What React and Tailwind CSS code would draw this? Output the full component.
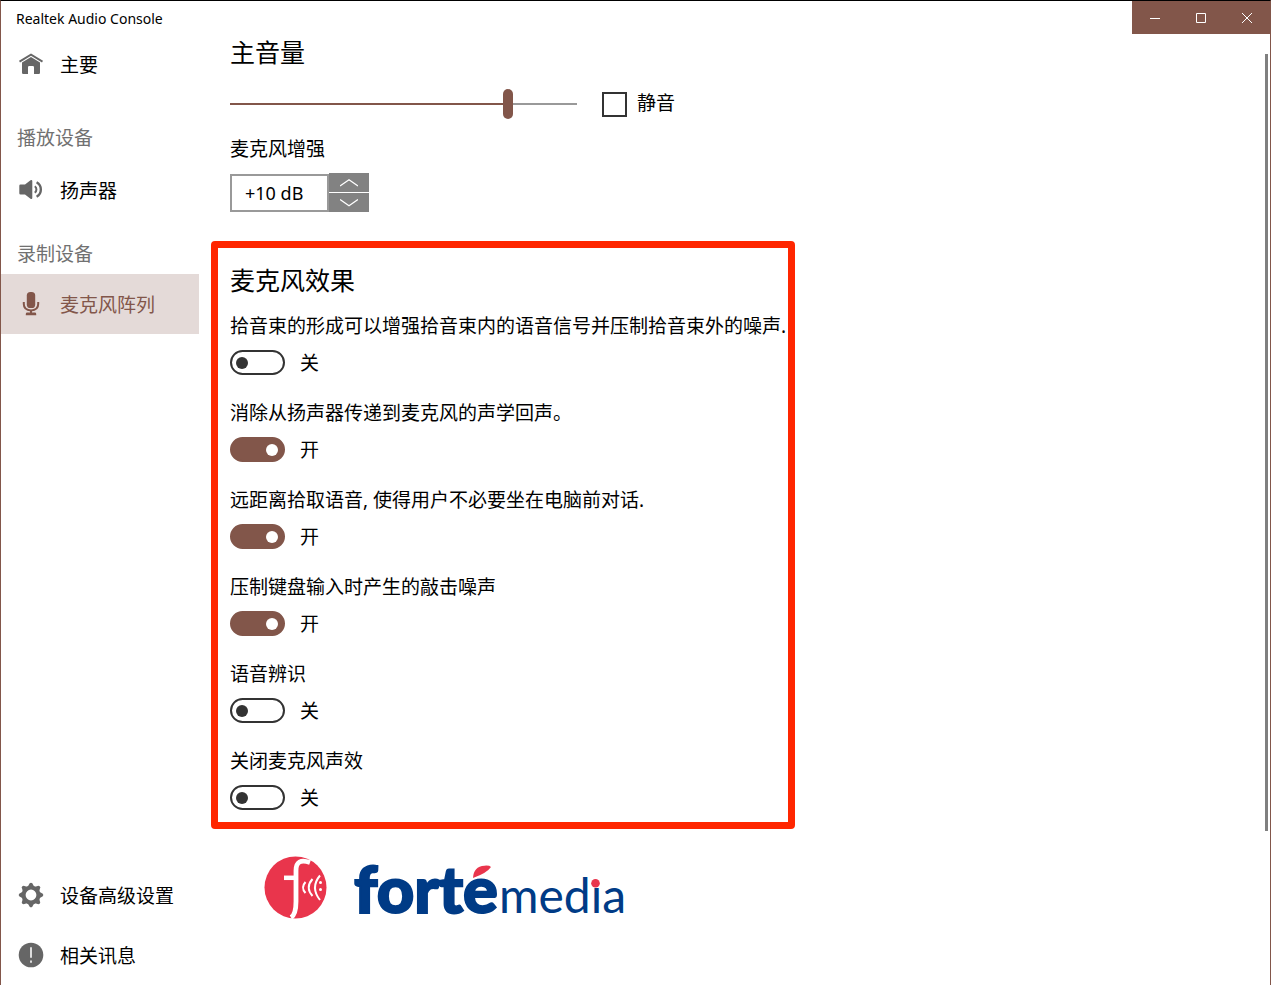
import React, { useState } from 'react';
import clsx from 'clsx';

const HomeIcon = () => (
  <svg viewBox="0 0 26 26" className="w-[26px] h-[26px]" fill="currentColor" aria-hidden="true">
    <path d="M13 2.400 25 9.800l-1 1.700L13 4.800 2 11.500 1 9.800z" />
    <path d="M13 5.900 22 11.500v10.200q0 1.200-1.200 1.200H16v-6.700q0-1.200-1.200-1.200h-3.600q-1.200 0-1.200 1.200v6.700H5.200Q4 22.900 4 21.700V11.500z" />
  </svg>
);

const SpeakerIcon = () => (
  <svg viewBox="0 0 26 26" className="w-[26px] h-[26px]" fill="currentColor" aria-hidden="true">
    <path d="M2.500 7.500h4.500L12.500 3.300Q14.300 2.400 14.300 4.300v16.400Q14.300 22.600 12.500 21.700L7 17.500H2.500Q1.300 17.500 1.300 16.300V8.700Q1.300 7.500 2.500 7.500z" />
    <path d="M16.800 9.300a4 4 0 0 1 0 6.400" fill="none" stroke="currentColor" strokeWidth="2" />
    <path d="M18.600 5.200a8.400 8.400 0 0 1 0 14.600" fill="none" stroke="currentColor" strokeWidth="2.400" />
  </svg>
);

const MicIcon = () => (
  <svg viewBox="0 0 26 26" className="w-[26px] h-[26px]" fill="currentColor" aria-hidden="true">
    <rect x="8.800" y="1" width="8.400" height="16" rx="3.600" />
    <path d="M5.800 11v2q0 6 7.200 6.400 7.200-.4 7.200-6.400v-2" fill="none" stroke="currentColor" strokeWidth="2" />
    <path d="M12 19h2v2.500h3.200q1 0 1 1.500v1.200H7.800V23q0-1.500 1-1.500H12z" />
  </svg>
);

const GearIcon = () => (
  <svg viewBox="0 0 26 26" className="w-[26px] h-[26px]" fill="currentColor" aria-hidden="true">
    <circle cx="13" cy="13" r="7.400" fill="none" stroke="currentColor" strokeWidth="4" />
    {[0, 45, 90, 135, 180, 225, 270, 315].map((angle) => (
      <path key={angle} d="M9.600 5 11.700 1.200q1.300-1 2.600 0L16.400 5z" transform={`rotate(${angle} 13 13)`} />
    ))}
  </svg>
);

const InfoIcon = () => (
  <svg viewBox="0 0 26 26" className="w-[26px] h-[26px]" aria-hidden="true">
    <circle cx="13" cy="13" r="12.300" fill="currentColor" />
    <path d="M13 5.200v10.600" stroke="#ddd" strokeWidth="2" />
    <path d="M13 18.500v2.200" stroke="#ddd" strokeWidth="2" />
  </svg>
);

const FortemediaLogo = () => (
  <svg viewBox="0 -12 370 96" className="w-[370px] h-[96px]" role="img" aria-label="fortémedia">
    <defs>
      {/* the accent and the dot are red shapes of their own, so the glyph tops fade out */}
      <linearGradient id="accent" gradientUnits="userSpaceOnUse" x1="0" y1="0" x2="0" y2="100">
        <stop offset="0.255" stopColor="#003b86" stopOpacity="0" />
        <stop offset="0.255" stopColor="#003b86" />
      </linearGradient>
      <linearGradient id="dot" gradientUnits="userSpaceOnUse" x1="0" y1="0" x2="0" y2="100">
        <stop offset="0.355" stopColor="#003b86" stopOpacity="0" />
        <stop offset="0.355" stopColor="#003b86" />
      </linearGradient>
    </defs>
    <circle cx="35.500" cy="34.500" r="31" fill="#e9354c" />
    <path d="M50 9.500q-14-5-14 8v31q0 13-5 16" fill="none" stroke="#fff" strokeWidth="4.800" />
    <path d="M24 24.800h12" stroke="#fff" strokeWidth="4.500" />
    <g fill="none" stroke="#fff" strokeWidth="2">
      <path d="M45.500 29q-5 5.500 0 11" />
      <path d="M52.500 26q-7.500 8.500 0 17" />
      <path d="M60 22.500q-10 12 0 24.500" />
    </g>
    <g fill="#fff">
      <circle cx="60.500" cy="29.500" r="1.500" />
      <circle cx="60.500" cy="36.500" r="1.500" />
    </g>
    <text x="94" y="60" fill="#003b86" stroke="#003b86" strokeWidth="2" className="font-['Lato'] font-black text-[65px]">
      fort<tspan fill="url(#accent)" stroke="url(#accent)">é</tspan>
    </text>
    <path d="M213 25Q213.500 13.500 224.500 12.700q5-.4 6.500 1.300-4 6-18 11z" fill="#e9354c" />
    <text x="239" y="60" fill="#003b86" className="font-['Lato'] font-normal text-[48px]">
      med<tspan fill="url(#dot)">i</tspan>a
    </text>
    <circle cx="335.500" cy="30.300" r="4.300" fill="#e9354c" />
  </svg>
);

const NavItem = ({ icon: Icon, label, active }) => (
  <a
    href="#"
    aria-current={active ? 'page' : undefined}
    className={clsx(
      'flex h-[60px] items-center gap-4 pl-[17px]',
      active ? 'bg-[#e4dad8] text-[#82564a]' : 'text-black'
    )}
  >
    <span className={active ? 'text-[#82564a]' : 'text-[#666]'}>
      <Icon />
    </span>
    <span className="pt-0.5">{label}</span>
  </a>
);

const ToggleRow = ({ id, label, defaultOn }) => {
  const [on, setOn] = useState(defaultOn);

  return (
    <div>
      <label htmlFor={id} className="block whitespace-nowrap leading-7">
        {label}
      </label>
      <div className="mt-2.5 flex h-[25px] items-center gap-[15px]">
        <input
          id={id}
          type="checkbox"
          role="switch"
          checked={on}
          onChange={(e) => setOn(e.target.checked)}
          className="flex h-[25px] w-[55px] appearance-none items-center rounded-full border-2 border-[#333] pr-[5px] pl-1 before:size-3 before:rounded-full before:bg-[#333] checked:justify-end checked:border-[#82564a] checked:bg-[#82564a] checked:before:bg-white"
        />
        <span className="pt-0.5">{on ? '开' : '关'}</span>
      </div>
    </div>
  );
};

const effects = [
  { id: 'beam', label: '拾音束的形成可以增强拾音束内的语音信号并压制拾音束外的噪声.', on: false },
  { id: 'echo', label: '消除从扬声器传递到麦克风的声学回声。', on: true },
  { id: 'far', label: '远距离拾取语音, 使得用户不必要坐在电脑前对话.', on: true },
  { id: 'keyboard', label: '压制键盘输入时产生的敲击噪声', on: true },
  { id: 'speech', label: '语音辨识', on: false },
  { id: 'off', label: '关闭麦克风声效', on: false },
];

const TitleBar = () => (
  <header className="flex h-[33px] justify-between">
    <h1 className="pl-[15px] text-[14px] leading-9">Realtek Audio Console</h1>
    <div className="flex bg-[#82564a] text-white">
      <button type="button" aria-label="最小化" className="flex w-[46px] items-center justify-center">
        <svg viewBox="0 0 10 10" className="size-2.5" stroke="currentColor">
          <path d="M0 5.500h10" />
        </svg>
      </button>
      <button type="button" aria-label="最大化" className="flex w-[46px] items-center justify-center">
        <svg viewBox="0 0 10 10" className="size-2.5" fill="none" stroke="currentColor">
          <path d="M.5.5h9v9h-9z" />
        </svg>
      </button>
      <button type="button" aria-label="关闭" className="flex w-[46px] items-center justify-center">
        <svg viewBox="0 0 10 10" className="size-2.5" stroke="currentColor">
          <path d="M0 0l10 10M10 0L0 10" />
        </svg>
      </button>
    </div>
  </header>
);

const Sidebar = () => (
  <nav className="flex w-[198px] shrink-0 flex-col">
    <NavItem icon={HomeIcon} label="主要" />
    <h2 className="mt-[30px] pl-4 leading-7 text-[#717171]">播放设备</h2>
    <div className="mt-2">
      <NavItem icon={SpeakerIcon} label="扬声器" />
    </div>
    <h2 className="mt-5 pl-4 leading-7 text-[#717171]">录制设备</h2>
    <div className="mt-1.5">
      <NavItem icon={MicIcon} label="麦克风阵列" active />
    </div>
    <div className="mt-auto">
      <NavItem icon={GearIcon} label="设备高级设置" />
      <NavItem icon={InfoIcon} label="相关讯息" />
    </div>
  </nav>
);

const App = () => {
  const [volume, setVolume] = useState(81);
  const [muted, setMuted] = useState(false);
  const [boost, setBoost] = useState(10);

  return (
    <div className="flex min-h-screen flex-col border-x border-t border-x-[#82564a] border-t-black bg-white font-['Noto_Sans','Noto_Sans_CJK_SC',sans-serif] text-[19px] text-black">
      <TitleBar />
      <div className="flex flex-1">
        <Sidebar />

        <main className="min-w-0 flex-1 pl-3">
          <section className="pl-[19px]">
            <h2 className="text-[25px] leading-9">主音量</h2>
            <div className="mt-[19px] flex h-[30px] items-center">
              <input
                type="range"
                aria-label="主音量"
                value={volume}
                onChange={(e) => setVolume(Number(e.target.value))}
                style={{ '--fill': `${volume}%` }}
                className="h-[30px] w-[347px] appearance-none bg-transparent [&::-webkit-slider-runnable-track]:h-0.5 [&::-webkit-slider-runnable-track]:bg-[linear-gradient(to_right,#82564a_var(--fill),#999_var(--fill))] [&::-webkit-slider-thumb]:-mt-3.5 [&::-webkit-slider-thumb]:h-[30px] [&::-webkit-slider-thumb]:w-2.5 [&::-webkit-slider-thumb]:appearance-none [&::-webkit-slider-thumb]:rounded-full [&::-webkit-slider-thumb]:bg-[#82564a]"
              />
              <label className="ml-[25px] flex items-center gap-2.5">
                <input
                  type="checkbox"
                  checked={muted}
                  onChange={(e) => setMuted(e.target.checked)}
                  className="size-[25px] appearance-none border-2 border-[#333] checked:bg-[#82564a]"
                />
                <span className="pb-0.5">静音</span>
              </label>
            </div>

            <label htmlFor="boost" className="mt-4 block leading-7">
              麦克风增强
            </label>
            <div className="mt-2.5 flex items-end">
              <input
                id="boost"
                type="text"
                readOnly
                value={`+${boost} dB`}
                className="h-[38px] w-[99px] border-2 border-[#999] pl-[13px] text-[18px]"
              />
              <div className="flex flex-col gap-px text-white">
                <button
                  type="button"
                  aria-label="增加"
                  onClick={() => setBoost(Math.min(boost + 10, 30))}
                  className="flex h-[19px] w-10 items-center justify-center bg-[#828282]"
                >
                  <svg viewBox="0 0 18 8" className="h-2 w-[18px]" fill="none" stroke="currentColor" strokeWidth="1.300">
                    <path d="M0 7 9 .8 18 7" />
                  </svg>
                </button>
                <button
                  type="button"
                  aria-label="减少"
                  onClick={() => setBoost(Math.max(boost - 10, 0))}
                  className="flex h-[19px] w-10 items-center justify-center bg-[#828282]"
                >
                  <svg viewBox="0 0 18 8" className="h-2 w-[18px]" fill="none" stroke="currentColor" strokeWidth="1.300">
                    <path d="M0 .5 9 6.700 18 .5" />
                  </svg>
                </button>
              </div>
            </div>
          </section>

          <section className="mt-[29px] w-full max-w-[584px] rounded-[4px] border-[7px] border-[#ff2600] px-3 pt-3.5 pb-3">
            <h2 className="text-[25px] leading-9">麦克风效果</h2>
            <div className="mt-3.5 flex flex-col gap-6">
              {effects.map((effect) => (
                <ToggleRow key={effect.id} id={effect.id} label={effect.label} defaultOn={effect.on} />
              ))}
            </div>
          </section>

          <div className="mt-3 pl-[49px]">
            <FortemediaLogo />
          </div>
        </main>

        {/* scroll thumb */}
        <div className="mt-5 mr-0.5 mb-[154px] w-[3px] bg-[#808080]" />
      </div>
    </div>
  );
};

export default App;
